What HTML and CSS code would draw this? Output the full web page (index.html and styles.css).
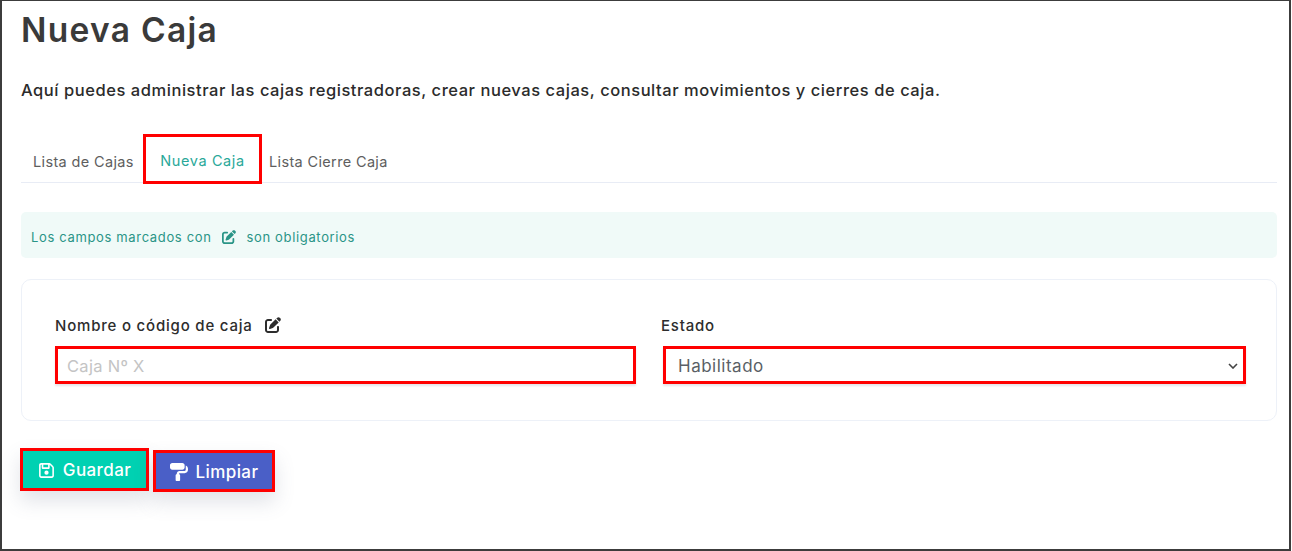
FILE: index.html
```html
<!DOCTYPE html>
<html lang="es">
<head>
<meta charset="utf-8">
<title>Nueva Caja</title>
<link rel="stylesheet" href="styles.css">
</head>
<body>
<main class="frame">
  <h1 class="title">Nueva Caja</h1>
  <p class="intro">Aquí puedes administrar las cajas registradoras, crear nuevas cajas, consultar movimientos y cierres de caja.</p>
  <nav class="tabs">
    <a class="tab tab-first">Lista de Cajas</a>
    <a class="tab tab-active">Nueva Caja</a>
    <a class="tab tab-last">Lista Cierre Caja</a>
  </nav>
  <div class="notice">
    <span>Los campos marcados con</span>
    <svg class="edit-icon" viewBox="0 0 512 512"><path fill="currentColor" d="M471.600 21.700c-21.900-21.900-57.300-21.900-79.200 0L362.300 51.700l97.900 97.900 30.100-30.100c21.900-21.900 21.900-57.300 0-79.200L471.600 21.700zm-299.200 220c-6.100 6.100-10.800 13.600-13.500 21.900l-29.600 88.800c-2.900 8.600-.6 18.100 5.800 24.600s15.900 8.700 24.600 5.800l88.800-29.600c8.200-2.700 15.700-7.400 21.900-13.500L437.700 172.300 339.700 74.300 172.400 241.700zM96 64C43 64 0 107 0 160V416c0 53 43 96 96 96H352c53 0 96-43 96-96V320c0-17.700-14.300-32-32-32s-32 14.300-32 32v96c0 17.700-14.300 32-32 32H96c-17.700 0-32-14.300-32-32V160c0-17.700 14.300-32 32-32h96c17.700 0 32-14.300 32-32s-14.300-32-32-32H96z"/></svg>
    <span>son obligatorios</span>
  </div>
  <form class="card">
    <div class="field">
      <label class="label">Nombre o código de caja
        <svg class="edit-icon label-icon" viewBox="0 0 512 512"><path fill="currentColor" d="M471.600 21.700c-21.900-21.900-57.300-21.900-79.200 0L362.300 51.700l97.900 97.900 30.100-30.100c21.900-21.900 21.900-57.300 0-79.200L471.600 21.700zm-299.200 220c-6.100 6.100-10.800 13.600-13.500 21.900l-29.600 88.800c-2.900 8.600-.6 18.100 5.800 24.600s15.900 8.700 24.600 5.800l88.800-29.600c8.200-2.700 15.700-7.400 21.900-13.500L437.700 172.300 339.700 74.300 172.400 241.700zM96 64C43 64 0 107 0 160V416c0 53 43 96 96 96H352c53 0 96-43 96-96V320c0-17.700-14.300-32-32-32s-32 14.300-32 32v96c0 17.700-14.300 32-32 32H96c-17.700 0-32-14.300-32-32V160c0-17.700 14.300-32 32-32h96c17.700 0 32-14.300 32-32s-14.300-32-32-32H96z"/></svg>
      </label>
      <div class="control control-input"><span class="placeholder">Caja Nº X</span></div>
    </div>
    <div class="field field-state">
      <label class="label label-state">Estado</label>
      <div class="control control-select">
        <span class="value">Habilitado</span>
        <svg class="chevron" viewBox="0 0 10 6"><path d="M1 1l4 4 4-4" fill="none" stroke="currentColor" stroke-width="1.600"/></svg>
      </div>
    </div>
  </form>
  <div class="actions">
    <button type="button" class="btn btn-save">
      <svg class="btn-icon" viewBox="0 0 448 512"><path fill="currentColor" d="M48 96V416c0 8.800 7.200 16 16 16H384c8.800 0 16-7.200 16-16V170.500c0-4.200-1.700-8.300-4.700-11.300l33.900-33.900c12 12 18.700 28.300 18.700 45.300V416c0 35.300-28.700 64-64 64H64c-35.300 0-64-28.700-64-64V96C0 60.700 28.700 32 64 32H309.500c17 0 33.300 6.700 45.300 18.700l74.500 74.500-33.900 33.900L320.800 84.700c-.3-.3-.5-.5-.8-.8V184c0 13.300-10.700 24-24 24H104c-13.300 0-24-10.700-24-24V80H64c-8.800 0-16 7.200-16 16zm80-16v80H272V80H128zm32 240a64 64 0 1 1 128 0 64 64 0 1 1 -128 0z"/></svg>
      Guardar
    </button>
    <button type="button" class="btn btn-clear">
      <svg class="btn-icon btn-icon-roller" viewBox="0 0 512 512"><path fill="currentColor" d="M0 64C0 28.700 28.700 0 64 0H352c35.300 0 64 28.700 64 64v64c0 35.300-28.700 64-64 64H64c-35.300 0-64-28.700-64-64V64zM160 352c0-17.700 14.300-32 32-32V304c0-44.200 35.800-80 80-80H416c17.700 0 32-14.300 32-32V160 69.500c37.300 13.200 64 48.700 64 90.500v32c0 53-43 96-96 96H272c-8.800 0-16 7.200-16 16v16c17.700 0 32 14.300 32 32V480c0 17.700-14.300 32-32 32H192c-17.700 0-32-14.300-32-32V352z"/></svg>
      Limpiar
    </button>
  </div>
</main>
</body>
</html>
```
FILE: styles.css
```css
* { box-sizing: border-box; }

html, body {
  margin: 0;
  background: #fff;
}

.frame {
  width: 1291px;
  height: 551px;
  padding: 0 12px 0 19px;
  border: solid #3c3c3c;
  border-width: 1px 2px 2px 2px;
  font-family: Inter, "Noto Sans", sans-serif;
  color: #3a3a3a;
  overflow: hidden;
}

.title {
  margin: 10px 0 0;
  font-size: 33.500px;
  line-height: 38px;
  font-weight: 600;
  color: #3a3a3a;
  letter-spacing: 1.300px;
}

.intro {
  margin: 30px 0 0;
  font-size: 16.500px;
  line-height: 22px;
  font-weight: 500;
  color: #2b2b2b;
  letter-spacing: 0.550px;
}

.tabs {
  display: flex;
  margin-top: 33px;
  height: 49px;
  border-bottom: 1px solid #e8ecf5;
}

.tab {
  display: flex;
  align-items: center;
  font-size: 14.500px;
  letter-spacing: 0.350px;
  color: #5e5e5e;
  padding-top: 7px;
}

.tab-first { padding-left: 12px; width: 122px; }

.tab-active {
  width: 119px;
  height: 50px;
  justify-content: center;
  color: #2aa899;
  letter-spacing: 0.600px;
  border: 3px solid #f00;
  padding-top: 2px;
}

.tab-last { padding-left: 7px; }

.notice {
  display: flex;
  align-items: center;
  height: 46px;
  margin-top: 29px;
  padding: 3px 0 0 10px;
  background: #f0faf8;
  border-radius: 5px;
  font-size: 13px;
  letter-spacing: 0.650px;
  color: #2a9587;
}

.edit-icon {
  width: 14px;
  height: 14px;
  margin: 0 11px 0 10px;
}

.card {
  display: flex;
  height: 142px;
  margin-top: 21px;
  padding: 36px 30px 0 33px;
  gap: 27px;
  border: 1px solid #edf1f8;
  border-radius: 10px;
}

.field { width: 581px; }
.field-state { width: 583px; }

.label {
  display: flex;
  align-items: center;
  height: 18px;
  font-size: 15px;
  letter-spacing: 0.800px;
  font-weight: 500;
  color: #2d2d2d;
}

.label-state { margin-left: -2px; }

.label-icon {
  margin: 0 0 0 12px;
  width: 16px;
  height: 16px;
}

.control {
  display: flex;
  align-items: center;
  height: 38px;
  margin-top: 12px;
  border: 3px solid #f00;
  box-shadow: 0 2px 2px #e6e6ea;
}

.control-input { padding: 2px 0 0 9px; }
.control-select { padding: 1px 5px 0 12px; justify-content: space-between; }

.placeholder {
  color: #c4c4c4;
  font-size: 16.500px;
  letter-spacing: 0.300px;
}

.value {
  color: #5a5f66;
  font-size: 17px;
  letter-spacing: 0.500px;
}

.chevron {
  width: 10px;
  height: 6px;
  color: #444;
}

.actions {
  display: flex;
  align-items: flex-start;
  gap: 4px;
  margin-top: 27px;
}

.btn {
  display: flex;
  align-items: center;
  justify-content: center;
  gap: 8px;
  border: 3px solid #f00;
  color: #fff;
  font: 500 17px Inter, "Noto Sans", sans-serif;
  letter-spacing: 0.400px;
  padding: 1px 0 0;
  box-shadow: 0 10px 20px rgba(90, 100, 130, 0.18);
}

.btn-save {
  width: 129px;
  height: 43px;
  margin-left: -1px;
  background: #00d1b2;
}

.btn-clear {
  width: 122px;
  height: 42px;
  margin-top: 2px;
  background: #4a5fc7;
}

.btn-icon { width: 17px; height: 17px; }
.btn-icon-roller { width: 18px; height: 18px; }
```
